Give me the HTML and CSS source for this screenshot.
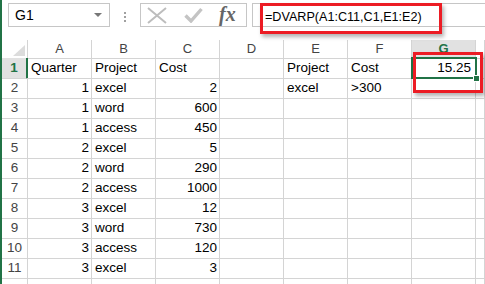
FILE: index.html
```html
<!DOCTYPE html>
<html lang="en">
<head>
  <meta charset="UTF-8" />
  <title>DVARP - Excel</title>
  <link rel="stylesheet" href="styles.css">
</head>
<body>
  <div class="window">
    <div class="toolbar">
      <div class="name-box">
        <span>G1</span>
        <span class="arrow"></span>
      </div>
      <div class="grip"><i></i><i></i><i></i></div>
      <div class="buttons">
        <svg class="icon-x" width="20" height="17" viewBox="0 0 20 17">
          <path d="M1 1 L19 16 M19 1 L1 16" stroke="#bdbdbd" stroke-width="2" fill="none"/>
        </svg>
        <svg class="icon-check" width="19" height="16" viewBox="0 0 19 16">
          <path d="M1.5 8.5 L7 14 L17.5 2" stroke="#c4c4c4" stroke-width="3.4" fill="none"/>
        </svg>
        <span class="fx">fx</span>
      </div>
      <div class="formula">
        <span class="formula-text">=DVARP(A1:C11,C1,E1:E2)</span>
        <div class="callout formula-callout"></div>
      </div>
    </div>

    <div class="sheet">
      <div class="row head">
        <div class="corner"><span class="tri"></span></div>
        <div>A</div><div>B</div><div>C</div><div>D</div><div>E</div><div>F</div><div class="active">G</div><div></div>
      </div>
      <div class="row">
        <div class="rh active">1</div>
        <div>Quarter</div><div>Project</div><div>Cost</div><div></div><div>Project</div><div>Cost</div>
        <div class="num selected">15.25
          <span class="selection"><span class="handle"></span></span>
          <span class="callout cell-callout"></span>
        </div>
        <div></div>
      </div>
      <div class="row">
        <div class="rh">2</div>
        <div class="num">1</div><div>excel</div><div class="num">2</div><div></div><div>excel</div><div>&gt;300</div><div></div><div></div>
      </div>
      <div class="row">
        <div class="rh">3</div>
        <div class="num">1</div><div>word</div><div class="num">600</div><div></div><div></div><div></div><div></div><div></div>
      </div>
      <div class="row">
        <div class="rh">4</div>
        <div class="num">1</div><div>access</div><div class="num">450</div><div></div><div></div><div></div><div></div><div></div>
      </div>
      <div class="row">
        <div class="rh">5</div>
        <div class="num">2</div><div>excel</div><div class="num">5</div><div></div><div></div><div></div><div></div><div></div>
      </div>
      <div class="row">
        <div class="rh">6</div>
        <div class="num">2</div><div>word</div><div class="num">290</div><div></div><div></div><div></div><div></div><div></div>
      </div>
      <div class="row">
        <div class="rh">7</div>
        <div class="num">2</div><div>access</div><div class="num">1000</div><div></div><div></div><div></div><div></div><div></div>
      </div>
      <div class="row">
        <div class="rh">8</div>
        <div class="num">3</div><div>excel</div><div class="num">12</div><div></div><div></div><div></div><div></div><div></div>
      </div>
      <div class="row">
        <div class="rh">9</div>
        <div class="num">3</div><div>word</div><div class="num">730</div><div></div><div></div><div></div><div></div><div></div>
      </div>
      <div class="row">
        <div class="rh">10</div>
        <div class="num">3</div><div>access</div><div class="num">120</div><div></div><div></div><div></div><div></div><div></div>
      </div>
      <div class="row">
        <div class="rh">11</div>
        <div class="num">3</div><div>excel</div><div class="num">3</div><div></div><div></div><div></div><div></div><div></div>
      </div>
      <div class="row">
        <div class="rh"></div>
        <div></div><div></div><div></div><div></div><div></div><div></div><div></div><div></div>
      </div>
    </div>
  </div>
</body>
</html>
```

FILE: styles.css
```css
* {
  box-sizing: border-box;
}

body {
  margin: 0;
  background: #fff;
  font-family: 'Liberation Sans', Arial, sans-serif;
  color: #000;
}

.window {
  width: 485px;
  height: 284px;
  border-left: 2px solid #217346;
  overflow: hidden;
}

/* formula bar */
.toolbar {
  display: flex;
  align-items: flex-start;
  height: 40px;
  padding: 3px 0 0 6px;
}

.name-box {
  width: 102px;
  height: 24px;
  border: 1px solid #c6c6c6;
  display: flex;
  align-items: center;
  justify-content: space-between;
  padding: 0 7px 0 6px;
  font-size: 14px;
}

.arrow {
  width: 0;
  height: 0;
  border-left: 4px solid transparent;
  border-right: 4px solid transparent;
  border-top: 4px solid #777;
}

.grip {
  display: flex;
  flex-direction: column;
  gap: 2px;
  margin: 9px 14px 0 14px;
}

.grip i {
  width: 2px;
  height: 2px;
  background: #a0a0a0;
}

.buttons {
  width: 107px;
  height: 24px;
  border: 1px solid #c6c6c6;
  display: flex;
  align-items: center;
  padding-left: 6px;
}

.icon-x {
  margin-top: 1px;
}

.icon-check {
  margin-left: 17px;
}

.fx {
  margin-left: 16px;
  font-family: 'Liberation Serif', 'Times New Roman', serif;
  font-style: italic;
  font-weight: bold;
  font-size: 20px;
  color: #666;
  margin-top: -2px;
}

.formula {
  flex: 1;
  height: 24px;
  margin-left: 5px;
  border: 1px solid #c6c6c6;
  border-right: none;
  position: relative;
  padding-left: 12px;
  font-size: 12.6px;
  line-height: 27px;
}

.callout {
  position: absolute;
  border: 3px solid #ec1c24;
  box-shadow: 2px 3px 4px rgba(0, 0, 0, 0.3);
}

.formula-callout {
  left: 7px;
  top: -1px;
  width: 182px;
  height: 31px;
}

/* grid */
.sheet {
  font-size: 13.5px;
}

.row {
  display: grid;
  grid-template-columns: 26px repeat(7, 64px) 1fr;
  height: 20px;
}

.row > div {
  border-right: 1px solid #d4d4d4;
  border-bottom: 1px solid #d4d4d4;
  line-height: 20px;
  padding: 0 3px;
  white-space: nowrap;
}

.row.head {
  height: 18px;
}

.row.head > div {
  line-height: 18px;
  text-align: center;
  color: #444;
  font-size: 13px;
}

.row.head > div.active {
  background: #e1e1e1;
  color: #217346;
  font-weight: bold;
}

.row > .corner {
  display: flex;
  align-items: flex-end;
  justify-content: flex-end;
  padding: 0 2px 2px 0;
}

.tri {
  width: 0;
  height: 0;
  border-left: 12px solid transparent;
  border-bottom: 11px solid #dcdcdc;
}

.row > .rh {
  text-align: center;
  color: #444;
  padding: 0;
}

.row > .rh.active {
  background: #e1e1e1;
  color: #217346;
  font-weight: bold;
  border-right: 2px solid #217346;
}

.row > .num {
  text-align: right;
  padding-right: 2px;
}

.selected {
  position: relative;
  padding-right: 4px !important;
}

.selection {
  position: absolute;
  left: -1px;
  top: -1px;
  width: 66px;
  height: 22px;
  border: 2px solid #217346;
}

.handle {
  position: absolute;
  right: -5px;
  bottom: -5px;
  width: 7px;
  height: 7px;
  background: #217346;
  border: 1px solid #fff;
}

.cell-callout {
  left: 1px;
  top: -6px;
  width: 70px;
  height: 41px;
}
```
